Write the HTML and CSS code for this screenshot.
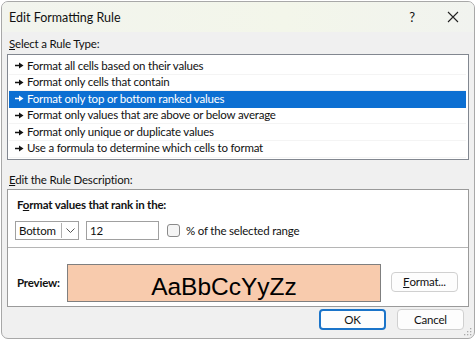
FILE: index.html
```html
<!DOCTYPE html>
<html>
<head>
<meta charset="utf-8">
<link rel="stylesheet" href="styles.css">
</head>
<body>
<div class="window">
  <div class="titlebar">
    <span class="title">Edit Formatting Rule</span>
    <span class="help">?</span>
    <span class="close">
      <svg width="12" height="12" viewBox="0 0 12 12"><path d="M1 1L11 11M11 1L1 11" stroke="#222" stroke-width="1.1" fill="none"/></svg>
    </span>
  </div>
  <div class="content">
    <div class="label"><u>S</u>elect a Rule Type:</div>
    <div class="listbox">
      <div class="item"><svg class="arrow" width="9" height="7" viewBox="0 0 9 7"><path d="M0 3.5H5" stroke="currentColor" stroke-width="1.3"/><path d="M4 0.5L8.5 3.5L4 6.5Z" fill="currentColor"/></svg>Format all cells based on their values</div>
      <div class="item"><svg class="arrow" width="9" height="7" viewBox="0 0 9 7"><path d="M0 3.5H5" stroke="currentColor" stroke-width="1.3"/><path d="M4 0.5L8.5 3.5L4 6.5Z" fill="currentColor"/></svg>Format only cells that contain</div>
      <div class="item selected"><svg class="arrow" width="9" height="7" viewBox="0 0 9 7"><path d="M0 3.5H5" stroke="currentColor" stroke-width="1.3"/><path d="M4 0.5L8.5 3.5L4 6.5Z" fill="currentColor"/></svg>Format only top or bottom ranked values</div>
      <div class="item"><svg class="arrow" width="9" height="7" viewBox="0 0 9 7"><path d="M0 3.5H5" stroke="currentColor" stroke-width="1.3"/><path d="M4 0.5L8.5 3.5L4 6.5Z" fill="currentColor"/></svg>Format only values that are above or below average</div>
      <div class="item"><svg class="arrow" width="9" height="7" viewBox="0 0 9 7"><path d="M0 3.5H5" stroke="currentColor" stroke-width="1.3"/><path d="M4 0.5L8.5 3.5L4 6.5Z" fill="currentColor"/></svg>Format only unique or duplicate values</div>
      <div class="item"><svg class="arrow" width="9" height="7" viewBox="0 0 9 7"><path d="M0 3.5H5" stroke="currentColor" stroke-width="1.3"/><path d="M4 0.5L8.5 3.5L4 6.5Z" fill="currentColor"/></svg>Use a formula to determine which cells to format</div>
    </div>
    <div class="label label2"><u>E</u>dit the Rule Description:</div>
    <div class="descbox">
      <div class="desc-top">
        <div class="heading">F<u>o</u>rmat values that rank in the:</div>
        <div class="controls">
          <div class="select">
            <span class="select-value">Bottom</span>
            <span class="select-btn">
              <svg width="9" height="5" viewBox="0 0 9 5"><path d="M0.5 0.5L4.5 4.5L8.5 0.5" stroke="#555" stroke-width="1" fill="none"/></svg>
            </span>
          </div>
          <div class="input">12</div>
          <span class="checkbox"></span>
          <span class="check-label">% of the selected ran<u>g</u>e</span>
        </div>
      </div>
      <div class="desc-preview">
        <span class="preview-label">Preview:</span>
        <div class="preview-box"><span class="preview-text">AaBbCcYyZz</span></div>
        <div class="btn format-btn"><u>F</u>ormat...</div>
      </div>
    </div>
  </div>
  <div class="footer">
    <div class="btn ok-btn">OK</div>
    <div class="btn">Cancel</div>
  </div>
  <svg class="grip" width="8" height="8" viewBox="0 0 8 8">
    <rect x="6" y="0" width="1.3" height="1.3" fill="#aaa"/>
    <rect x="3" y="3" width="1.3" height="1.3" fill="#aaa"/>
    <rect x="6" y="3" width="1.3" height="1.3" fill="#aaa"/>
    <rect x="0" y="6" width="1.3" height="1.3" fill="#aaa"/>
    <rect x="3" y="6" width="1.3" height="1.3" fill="#aaa"/>
    <rect x="6" y="6" width="1.3" height="1.3" fill="#aaa"/>
  </svg>
</div>
</body>
</html>
```
FILE: styles.css
```css
* { box-sizing: border-box; }
html, body { margin: 0; padding: 0; }
body {
  width: 476px;
  height: 340px;
  background: #ffffff;
  font-family: "Lato", "Noto Sans", sans-serif;
  font-size: 11.5px;
  letter-spacing: -0.2px;
  color: #111;
  overflow: hidden;
}
u { text-decoration: underline; text-underline-offset: 1px; }
.window {
  position: relative;
  margin: 1px;
  width: 474px;
  height: 338px;
  border: 1px solid #a8a8a8;
  border-radius: 7px;
  background: #f0f0f0;
  overflow: hidden;
  display: flex;
  flex-direction: column;
}
.titlebar {
  height: 30px;
  flex: none;
  display: flex;
  align-items: center;
  background: linear-gradient(90deg, #f2f4ee 0%, #f3f6ea 60%, #f1f3ef 100%);
  padding-left: 7px;
}
.title { font-size: 12.5px; letter-spacing: 0; flex: 1; }
.help { width: 14px; font-size: 13px; margin-right: 28px; text-align: center; }
.close { width: 12px; height: 12px; margin-right: 15px; display: flex; }
.content {
  padding: 0 5px 0 5px;
  flex: none;
}
.label {
  height: 21px;
  line-height: 21px;
  padding-left: 2px;
  margin-top: 1px;
}
.label2 {
  margin-top: 10px;
  height: 19px;
  line-height: 19px;
}
.listbox {
  height: 106px;
  border: 1px solid #828790;
  background: #fff;
  padding: 3px 2px 0 1px;
}
.item {
  height: 16.6px;
  line-height: 16.6px;
  display: flex;
  align-items: center;
  padding-left: 6px;
  border-bottom: 1px solid #f4f4f4;
  white-space: nowrap;
}
.item.selected { background: #0c6fd2; color: #fff; border-bottom-color: #0c6fd2; }
.arrow { margin-right: 3px; flex: none; }
.descbox {
  height: 118px;
  border: 1px solid #9a9a9a;
  background: #fff;
  display: flex;
  flex-direction: column;
}
.desc-top {
  height: 58px;
  border-bottom: 1px solid #b5b5b5;
  padding: 6px 0 0 8px;
}
.heading { font-weight: 700; height: 17px; line-height: 17px; padding-left: 1px; }
.controls {
  margin-top: 8px;
  display: flex;
  align-items: center;
}
.select {
  width: 64px;
  height: 19px;
  border: 1px solid #a0a0a0;
  display: flex;
  align-items: stretch;
  margin-left: -1px;
}
.select-value { flex: 1; padding-left: 3px; line-height: 17px; }
.select-btn {
  width: 17px;
  border-left: 1px solid #b0b0b0;
  margin: 1px 0;
  display: flex;
  align-items: center;
  justify-content: center;
}
.input {
  margin-left: 7px;
  width: 73px;
  height: 19px;
  border: 1px solid #a0a0a0;
  padding-left: 3px;
  line-height: 17px;
}
.checkbox {
  margin-left: 8px;
  width: 13px;
  height: 13px;
  border: 1px solid #8a8a8a;
  border-radius: 3px;
  background: #f5f5f5;
}
.check-label { margin-left: 6px; }
.desc-preview {
  flex: 1;
  display: flex;
  align-items: flex-start;
  padding: 16px 0 0 9px;
}
.preview-label { font-weight: 700; width: 50px; margin-top: 12px; line-height: 14px; }
.preview-box {
  width: 314px;
  height: 38px;
  border: 1px solid #7f7f7f;
  background: #f8cbad;
  display: flex;
  justify-content: center;
  align-items: flex-start;
  overflow: hidden;
}
.preview-text {
  font-family: "Liberation Sans", Arial, sans-serif;
  font-size: 24.5px;
  letter-spacing: 0;
  line-height: 28px;
  margin-top: 8px;
  color: #000;
}
.btn {
  width: 67px;
  height: 21px;
  border: 1px solid #d0d0d0;
  border-radius: 4px;
  background: #fdfdfd;
  display: flex;
  align-items: center;
  justify-content: center;
  line-height: 1;
}
.format-btn { margin-left: 10px; height: 20px; margin-top: 8px; }
.footer {
  display: flex;
  justify-content: flex-end;
  gap: 11px;
  padding: 2px 10px 0 0;
}
.ok-btn { border: 2px solid #1b74c9; }
.grip { position: absolute; right: 2px; bottom: 2px; }
```
